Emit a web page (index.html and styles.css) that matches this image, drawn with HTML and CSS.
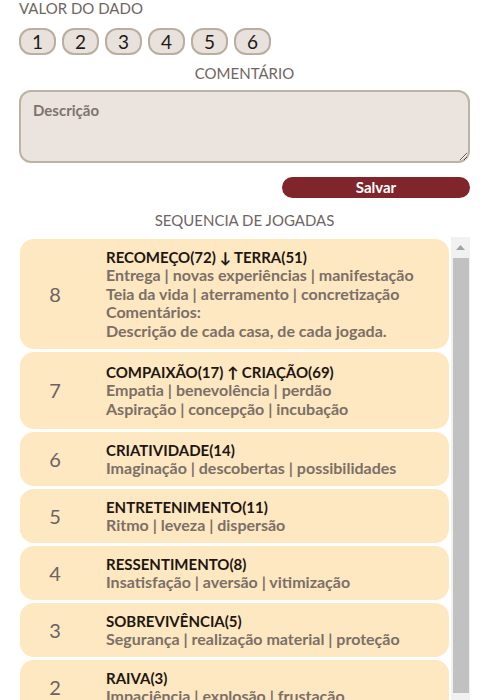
FILE: index.html
```html
<!DOCTYPE html>
<html lang="pt-BR">

<head>
    <meta charset="UTF-8">
    <meta name="viewport" content="width=device-width, initial-scale=1.0">
    <title>Jogo - Sequencia de jogadas</title>
    <link rel="stylesheet" href="styles.css">
</head>

<body>
    <div class="painel">
        <h2 class="rotulo">VALOR DO DADO</h2>
        <div class="dados">
            <button class="dado">1</button>
            <button class="dado">2</button>
            <button class="dado">3</button>
            <button class="dado">4</button>
            <button class="dado">5</button>
            <button class="dado">6</button>
        </div>

        <h2 class="rotulo centro">COMENTÁRIO</h2>
        <textarea class="comentario" placeholder="Descrição"></textarea>
        <div class="acoes">
            <button class="salvar">Salvar</button>
        </div>

        <h2 class="rotulo centro seq">SEQUENCIA DE JOGADAS</h2>
        <div class="caixa">
            <div class="lista">
                <div class="jogada">
                    <div class="numero">8</div>
                    <div class="info">
                        <div class="titulo">RECOMEÇO(72) <span class="seta">↓</span> TERRA(51)</div>
                        <div class="desc">Entrega | novas experiências | manifestação</div>
                        <div class="desc">Teia da vida | aterramento | concretização</div>
                        <div class="desc">Comentários:</div>
                        <div class="desc">Descrição de cada casa, de cada jogada.</div>
                    </div>
                </div>
                <div class="jogada">
                    <div class="numero">7</div>
                    <div class="info">
                        <div class="titulo">COMPAIXÃO(17) <span class="seta">↑</span> CRIAÇÃO(69)</div>
                        <div class="desc">Empatia | benevolência | perdão</div>
                        <div class="desc">Aspiração | concepção | incubação</div>
                    </div>
                </div>
                <div class="jogada">
                    <div class="numero">6</div>
                    <div class="info">
                        <div class="titulo">CRIATIVIDADE(14)</div>
                        <div class="desc">Imaginação | descobertas | possibilidades</div>
                    </div>
                </div>
                <div class="jogada">
                    <div class="numero">5</div>
                    <div class="info">
                        <div class="titulo">ENTRETENIMENTO(11)</div>
                        <div class="desc">Ritmo | leveza | dispersão</div>
                    </div>
                </div>
                <div class="jogada">
                    <div class="numero">4</div>
                    <div class="info">
                        <div class="titulo">RESSENTIMENTO(8)</div>
                        <div class="desc">Insatisfação | aversão | vitimização</div>
                    </div>
                </div>
                <div class="jogada">
                    <div class="numero">3</div>
                    <div class="info">
                        <div class="titulo">SOBREVIVÊNCIA(5)</div>
                        <div class="desc">Segurança | realização material | proteção</div>
                    </div>
                </div>
                <div class="jogada">
                    <div class="numero">2</div>
                    <div class="info">
                        <div class="titulo">RAIVA(3)</div>
                        <div class="desc">Impaciência | explosão | frustação</div>
                    </div>
                </div>
            </div>
            <!-- barra de rolagem desenhada -->
            <div class="barra">
                <div class="barra-seta">
                    <svg width="9" height="5" viewBox="0 0 9 5"><polygon points="0,5 4.5,0 9,5" fill="#a3a3a3"/></svg>
                </div>
                <div class="barra-polegar"></div>
            </div>
        </div>
    </div>
</body>

</html>
```

FILE: styles.css
```css
html,
body {
    margin: 0;
    height: 700px;
    overflow: hidden;
    background-color: #ffffff;
    font-family: Lato, "Open Sans", sans-serif;
}

.painel {
    padding: 0 18px 0 19px;
    display: flex;
    flex-direction: column;
}

.rotulo {
    margin: 0;
    font-size: 15px;
    font-weight: 400;
    color: #6f6561;
    line-height: 16px;
}

.centro {
    text-align: center;
    margin-top: 10px;
}

.seq {
    margin-top: 14px;
    margin-bottom: 9px;
}

.dados {
    display: flex;
    gap: 6px;
    margin-top: 12px;
}

.dado {
    width: 37px;
    height: 27px;
    padding: 0;
    border: 2px solid #b9ae9f;
    border-radius: 12px;
    background-color: #e9e1db;
    color: #1e1a18;
    font-family: Lato, sans-serif;
    font-size: 19px;
    line-height: 22px;
}

.comentario {
    margin-top: 9px;
    height: 73px;
    box-sizing: border-box;
    padding: 9px 12px;
    border: 2px solid #bdb3a4;
    border-radius: 12px;
    background-color: #ebe3dd;
    font-family: Lato, sans-serif;
    font-size: 15px;
    font-weight: 700;
    color: #4a403c;
    resize: vertical;
}

.comentario::placeholder {
    color: #7d7370;
}

.acoes {
    display: flex;
    justify-content: flex-end;
    margin-top: 14px;
}

.salvar {
    width: 188px;
    height: 21px;
    padding: 0;
    border: none;
    border-radius: 11px;
    background-color: #7f252b;
    color: #ffffff;
    font-family: Lato, sans-serif;
    font-size: 15px;
    font-weight: 700;
    line-height: 21px;
}

.caixa {
    display: flex;
    gap: 2px;
    height: 508px;
    overflow: hidden;
}

.lista {
    flex: 1;
    display: flex;
    flex-direction: column;
    gap: 3px;
    padding: 2px 0 0 1px;
}

.barra {
    width: 19px;
    flex-shrink: 0;
    background-color: #f1f1f1;
    display: flex;
    flex-direction: column;
    align-items: center;
}

.barra-seta {
    height: 21px;
    display: flex;
    justify-content: center;
    align-items: center;
}

.barra-polegar {
    width: 16px;
    height: 435px;
    background-color: #c1c1c1;
}

.jogada {
    flex-shrink: 0;
    display: flex;
    align-items: center;
    background-color: #fee8c1;
    border-radius: 14px;
    padding: 8.5px 10px 8.5px 0;
}

.numero {
    width: 70px;
    flex-shrink: 0;
    text-align: center;
    font-size: 20px;
    color: #6b6361;
    margin-right: 16px;
}

.info {
    line-height: 18.5px;
    font-size: 16px;
}

.titulo {
    color: #1d1612;
    font-weight: 700;
    font-size: 15px;
}

.seta {
    font-weight: 900;
}

.desc {
    color: #7b6f67;
    font-weight: 700;
}

.jogada:nth-child(2) {
    padding-top: 11px;
    padding-bottom: 11px;
}
```
